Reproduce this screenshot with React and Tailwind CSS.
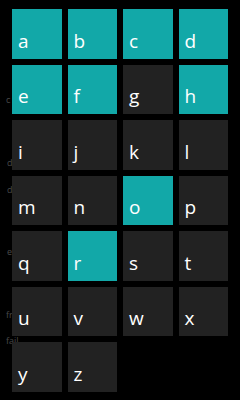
import React from "react";

const letters = "abcdefghijklmnopqrstuvwxyz".split("");
const active = new Set(["a", "b", "c", "d", "e", "f", "h", "o", "r"]);

export default function App() {
  return (
    <div
      className="relative w-[240px] h-[400px] bg-black overflow-hidden"
      style={{ fontFamily: '"Open Sans", "Noto Sans", sans-serif' }}
    >
      {/* faint underlying list, seen through the gaps */}
      <div className="flex flex-col pl-[6px] pt-[95px] text-[9px] leading-[9px] text-[#4a4a4a]">
        <span>c</span>
        <span className="mt-[54px] pl-px">d</span>
        <span className="mt-[18px] pl-px">d</span>
        <span className="mt-[53px] pl-px">e</span>
        <span className="mt-[54px]">fr</span>
        <span className="mt-[17px]">fail</span>
      </div>

      {/* jump list overlay */}
      <div className="absolute inset-0 grid grid-cols-[repeat(4,49.5px)] auto-rows-[49.5px] gap-[6px] pl-[12px] pt-[9px]">
        {letters.map((l) => (
          <div
            key={l}
            className={`flex items-end pl-[6px] pb-[8px] ${
              active.has(l) ? "bg-[#12a8a8]" : "bg-[#222222]"
            }`}
          >
            <span className="text-[19px] font-medium leading-none text-white">{l}</span>
          </div>
        ))}
      </div>
    </div>
  );
}
